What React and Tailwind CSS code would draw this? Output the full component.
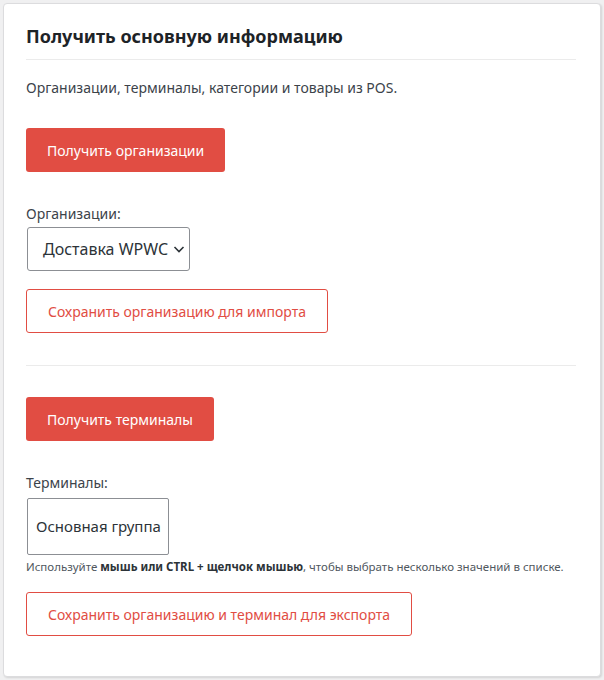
export default function App() {
  return (
    <div className="min-h-[680px] bg-[#f0f0f1] p-[3px] font-['Noto_Sans',sans-serif] text-[#3c434a]">
      <div className="rounded-[4px] border border-[#dcdcde] bg-white pl-[22px] pr-[24px] pt-[20px] pb-[40px] shadow-[1px_1px_2px_rgba(0,0,0,0.12)]">
        <h2 className="border-b border-[#ebebeb] pb-[11px] text-[18px] font-bold leading-6 text-[#1d2327]">
          Получить основную информацию
        </h2>

        <p className="mt-[18px] text-[14px] leading-5">Организации, терминалы, категории и товары из POS.</p>

        <button className="mt-[30px] h-11 rounded-[3px] bg-[#e14d43] px-[21px] text-[14px] text-white">
          Получить организации
        </button>

        <div className="mt-[32px] text-[14px] leading-5">Организации:</div>
        <div className="ml-px mt-[3px] flex h-11 w-[163px] items-center gap-[5px] rounded-[3px] border border-[#8c8f94] pl-[15px] text-[16px] text-[#2c3338]">
          <span>Доставка WPWC</span>
          <svg viewBox="0 0 12 12" className="h-3 w-3" fill="none" stroke="currentColor" strokeWidth="1.6">
            <path d="M1.5 4l4.5 4.5L10.5 4" />
          </svg>
        </div>

        <button className="mt-[18px] h-11 rounded-[3px] border border-[#e14d43] bg-white px-[21px] text-[14px] text-[#e14d43]">
          Сохранить организацию для импорта
        </button>

        <div className="mt-[32px] border-t border-[#ebebeb]" />

        <button className="mt-[31px] h-11 rounded-[3px] bg-[#e14d43] px-[21px] text-[14px] text-white">
          Получить терминалы
        </button>

        <div className="mt-[32px] text-[14px] leading-5">Терминалы:</div>
        <div className="ml-px mt-[5px] flex h-[57px] w-[142px] items-center overflow-hidden whitespace-nowrap rounded-[2px] border border-[#8c8f94] px-2 text-[15px] text-[#2c3338]">
          Основная группа
        </div>
        <p className="mt-[4px] text-[11.5px] leading-4 text-[#50575e]">
          Используйте <b className="text-[#2c3338]">мышь или CTRL + щелчок мышью</b>, чтобы выбрать несколько значений в списке.
        </p>

        <button className="mt-[17px] h-11 rounded-[3px] border border-[#e14d43] bg-white px-[21px] text-[14px] text-[#e14d43]">
          Сохранить организацию и терминал для экспорта
        </button>
      </div>
    </div>
  );
}
